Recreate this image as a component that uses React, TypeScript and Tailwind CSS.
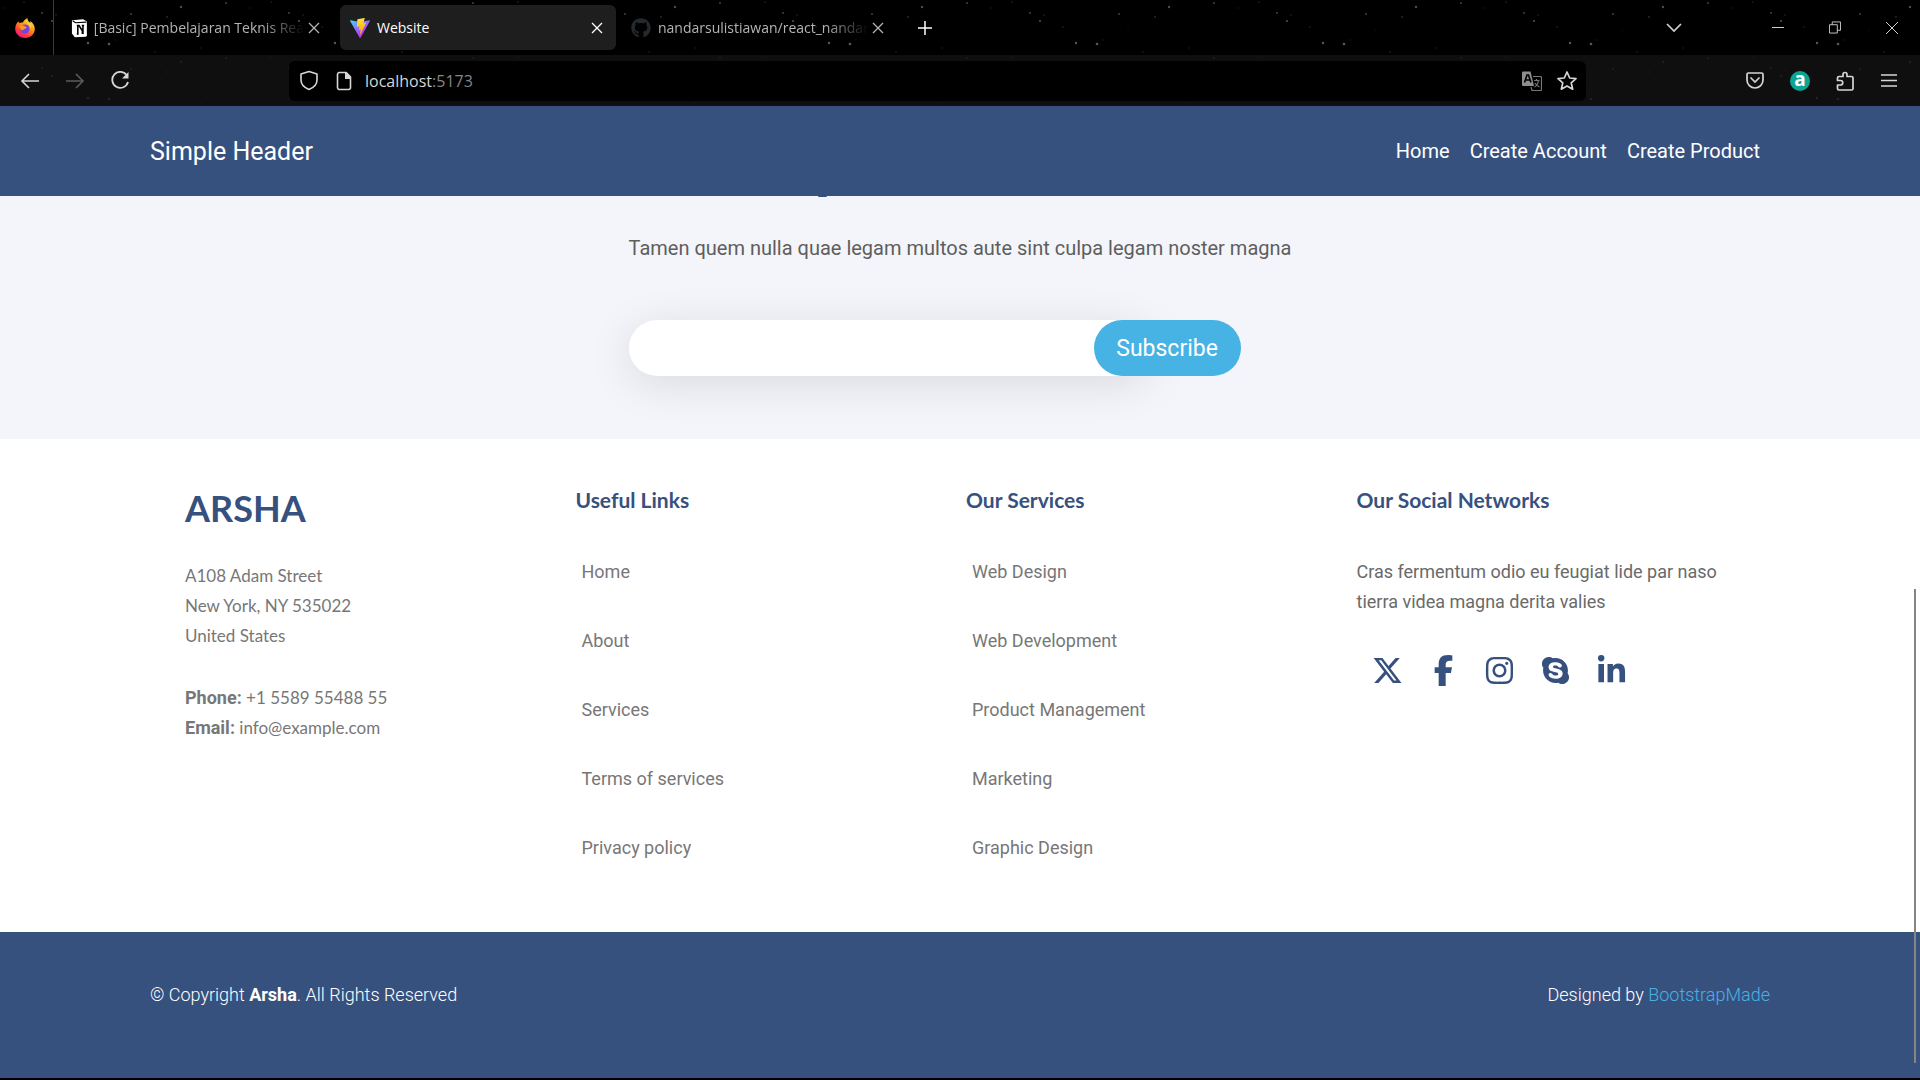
import type { ReactNode } from "react";
import { FaFacebookF, FaInstagram, FaLinkedinIn, FaSkype, FaXTwitter } from "react-icons/fa6";
import { FaGithub } from "react-icons/fa";

const clusters: [number, number, number, number][] = [
  [3, 8, 0.7, 0.25], [24, 2, 0.8, 0.4], [42, 13, 1, 0.6], [75, 27, 0.8, 0.35], [88, 43, 1.2, 0.8],
  [115, 40, 0.7, 0.25], [140, 30, 0.7, 0.2], [181, 7, 1.2, 0.7], [226, 3, 1, 0.6], [167, 17, 0.9, 0.4],
  [201, 48, 0.8, 0.3], [211, 70, 1, 0.3], [139, 68, 1, 0.35], [174, 97, 0.9, 0.3], [116, 98, 1, 0.3],
  [30, 56, 1, 0.35], [60, 88, 0.8, 0.2], [95, 62, 0.7, 0.25], [7, 76, 0.8, 0.2], [193, 80, 0.7, 0.2],
  [131, 14, 1, 0.6], [52, 21, 1.1, 0.7], [56, 15, 0.8, 0.4], [109, 44, 1.3, 0.8], [155, 52, 0.8, 0.35],
];

function Stars() {
  return (
    <svg aria-hidden="true" className="pointer-events-none absolute inset-0 h-full w-full">
      {Array.from({ length: 8 }, (_, k) =>
        clusters.map(([x, y, r, o], i) => (
          <circle key={k + "-" + i} cx={k * 247 + x} cy={y} r={r} fill="#c9c9c9" opacity={o * 0.55} />
        )),
      )}
    </svg>
  );
}

function IconButton({ label, className, children }: { label: string; className: string; children: ReactNode }) {
  return (
    <button type="button" aria-label={label} className={"flex h-6 shrink-0 items-center justify-center " + className}>
      {children}
    </button>
  );
}

function CloseIcon() {
  return (
    <svg width="12" height="12" viewBox="0 0 12 12" stroke="currentColor" strokeWidth="1.3" fill="none">
      <path d="M1 1l10 10M11 1L1 11" />
    </svg>
  );
}

function FirefoxIcon() {
  return (
    <svg width="20" height="20" viewBox="0 0 20 20">
      <defs>
        <linearGradient id="ff" x1="0.8" y1="0" x2="0.2" y2="1">
          <stop offset="0" stopColor="#fff44f" />
          <stop offset="0.4" stopColor="#ff980e" />
          <stop offset="0.75" stopColor="#ff3647" />
          <stop offset="1" stopColor="#e31587" />
        </linearGradient>
      </defs>
      <path d="M3.2 3.3c.3.9.8 1.5 1.3 1.8 1-.6 2.3-.8 3.4-.5C8.300 3 10 1.500 12.300 0c0 2.500 1.700 3.600 3 5.100.1-.7 0-1.400-.2-2C18 4.800 19.800 7.800 19.800 11c0 5-4.300 9-9.600 9S.2 16 .2 10.800c0-3 1.300-5.400 3-7.500z" fill="url(#ff)" />
      <circle cx="10" cy="11" r="4.600" fill="#7542e5" />
      <path d="M4.500 8c2-1.200 4-.6 5.600.6 1.500.2 1.700 1 .9 1.700-1.500.6-2.600.7-3 2.300-1.800-.4-3.200-2-3.500-4.600z" fill="#ff9a1f" />
      <path d="M12 5c2.300 1.300 3.800 3.700 3.500 6.500 1.500-2.500.8-5.500-1-7z" fill="#ffd43a" />
    </svg>
  );
}

function NotionIcon() {
  return (
    <svg width="18" height="20" viewBox="0 0 18 20">
      <path d="M1 1.800l12-1.300L17 3v15l-1 1.300-12 .5L1 16z" fill="#fff" />
      <path d="M1.800 2.200l3 2.200 11.600-.7" stroke="#000" strokeWidth="1.200" fill="none" />
      <path d="M6.200 7.300h2.400l4.200 6.700V7.500M6.200 16.500h2M7.300 7.500v9M11.500 7.300h2.600M12.200 13.500v2.800" stroke="#000" strokeWidth="1.700" fill="none" />
    </svg>
  );
}

function ViteIcon() {
  return (
    <svg width="20" height="20" viewBox="0 0 256 257">
      <defs>
        <linearGradient id="va" x1="-.8%" x2="57.600%" y1="7.600%" y2="78.400%">
          <stop offset="0" stopColor="#41D1FF" />
          <stop offset="1" stopColor="#BD34FE" />
        </linearGradient>
        <linearGradient id="vb" x1="43.400%" x2="50.300%" y1="2.200%" y2="89%">
          <stop offset="0" stopColor="#FFEA83" />
          <stop offset=".08" stopColor="#FFDD35" />
          <stop offset="1" stopColor="#FFA800" />
        </linearGradient>
      </defs>
      <path fill="url(#va)" d="M255.153 37.938L134.897 252.976c-2.483 4.440-8.862 4.466-11.382.048L.875 37.958c-2.746-4.814 1.371-10.646 6.827-9.670l120.385 21.517a6.537 6.537 0 0 0 2.322-.004l117.867-21.483c5.438-.991 9.574 4.796 6.877 9.620Z" />
      <path fill="url(#vb)" d="M185.432.063L96.440 17.501a3.268 3.268 0 0 0-2.634 3.014l-5.474 92.456a3.268 3.268 0 0 0 3.997 3.378l24.777-5.718c2.318-.535 4.413 1.507 3.936 3.838l-7.361 36.047c-.495 2.426 1.782 4.500 4.151 3.780l15.304-4.649c2.372-.720 4.652 1.360 4.150 3.788l-11.698 56.621c-.732 3.542 3.979 5.473 5.943 2.437l1.313-2.028l72.516-144.720c1.215-2.423-.880-5.186-3.540-4.672l-25.505 4.922c-2.396.462-4.435-1.770-3.759-4.114l16.646-57.705c.677-2.350-1.370-4.583-3.769-4.113Z" />
    </svg>
  );
}

function TabStrip() {
  return (
    <div className="relative h-[55px] bg-black">
      <Stars />
      <div className="relative flex h-full items-center text-[#b4b4b4]">
        <div className="flex h-full w-[54px] shrink-0 items-center border-r border-[#3a3a3a] pl-[15px]">
          <FirefoxIcon />
        </div>
        <div className="flex w-[286px] items-center pr-5 pl-[17px]">
          <NotionIcon />
          <span className="ml-[6px] flex-1 text-sm whitespace-nowrap [mask-image:linear-gradient(to_right,black_80%,transparent)]">
            [Basic] Pembelajaran Teknis Rea
          </span>
          <IconButton label="Close Notion tab" className="ml-1 w-3"><CloseIcon /></IconButton>
        </div>
        <div className="flex h-[45px] w-[276px] items-center rounded-md bg-[#1e1e1e] px-[10px] text-white">
          <ViteIcon />
          <span className="ml-[7px] flex-1 text-sm">Website</span>
          <IconButton label="Close Website tab" className="w-[18px]"><CloseIcon /></IconButton>
        </div>
        <div className="flex w-[270px] items-center pl-[15px]">
          <FaGithub size={20} color="#24292e" />
          <span className="ml-[7px] w-[210px] text-sm whitespace-nowrap [mask-image:linear-gradient(to_right,black_80%,transparent)]">
            nandarsulistiawan/react_nandar
          </span>
          <IconButton label="Close GitHub tab" className="ml-1 w-3"><CloseIcon /></IconButton>
        </div>
        <IconButton label="New tab" className="ml-[31px] w-4 text-white">
          <svg width="16" height="16" viewBox="0 0 16 16" stroke="currentColor" strokeWidth="1.500"><path d="M8 1v14M1 8h14" /></svg>
        </IconButton>
        <div className="ml-auto flex items-center text-[#cfcfcf]">
          <IconButton label="List all tabs" className="w-4">
            <svg width="16" height="10" viewBox="0 0 16 10" stroke="currentColor" strokeWidth="1.700" fill="none"><path d="M1 1l7 7 7-7" /></svg>
          </IconButton>
          <IconButton label="Minimize" className="ml-[90px] w-3">
            <svg width="12" height="2" viewBox="0 0 12 2" fill="currentColor"><path d="M0 0h12v1H0z" /></svg>
          </IconButton>
          <IconButton label="Restore" className="ml-[45px] w-3">
            <svg width="13" height="13" viewBox="0 0 13 13" stroke="currentColor" fill="none"><path d="M.5 3.500h8.500v9H.5zM3.500 3.500v-3h9v9H9" /></svg>
          </IconButton>
          <IconButton label="Close window" className="mr-[21px] ml-[44px] w-[14px]">
            <svg width="14" height="14" viewBox="0 0 14 14" stroke="currentColor" fill="none"><path d="M1 1l12 12M13 1L1 13" /></svg>
          </IconButton>
        </div>
      </div>
    </div>
  );
}

function Toolbar() {
  return (
    <div className="relative h-[51px] bg-[#0f0f0f] text-[#d6d6d6]">
      <div className="absolute inset-0 overflow-hidden opacity-25"><Stars /></div>
      <div className="relative flex h-full items-center">
        <IconButton label="Back" className="ml-5 w-5">
          <svg width="20" height="16" viewBox="0 0 20 16" stroke="currentColor" strokeWidth="1.600" fill="none"><path d="M19 8H2M9 1L2 8l7 7" /></svg>
        </IconButton>
        <IconButton label="Forward" className="ml-[25px] w-5 text-[#5c5c5c]">
          <svg width="20" height="16" viewBox="0 0 20 16" stroke="currentColor" strokeWidth="1.600" fill="none"><path d="M1 8h17M11 1l7 7-7 7" /></svg>
        </IconButton>
        <IconButton label="Reload" className="ml-[25px] w-5">
          <svg width="20" height="20" viewBox="0 0 20 20" stroke="currentColor" strokeWidth="1.800" fill="none"><path d="M17 4.500A8 8 0 1 0 18 11" /><path d="M18.500 1v6.500H12z" fill="currentColor" stroke="none" /></svg>
        </IconButton>
        <div className="mr-40 ml-[159px] flex h-10 flex-1 items-center rounded-md bg-black">
          <IconButton label="Tracking protection" className="ml-[10px] w-5">
            <svg width="20" height="21" viewBox="0 0 20 21" stroke="currentColor" strokeWidth="1.600" fill="none"><path d="M10 1.500L18 4v6c0 4-3 7.500-8 9.500C5 17.500 2 14 2 10V4z" strokeLinejoin="round" /></svg>
          </IconButton>
          <IconButton label="Site information" className="ml-4 w-[18px]">
            <svg width="16" height="20" viewBox="0 0 16 20" stroke="currentColor" strokeWidth="1.600" fill="none"><path d="M3 1.500h7L14.500 6v10.500a2 2 0 0 1-2 2H3a2 2 0 0 1-1.500-2v-13A2 2 0 0 1 3 1.500z" /><path d="M9 1h1.500L15 5.500V8H9z" fill="currentColor" stroke="none" /></svg>
          </IconButton>
          <div className="ml-3 text-base">localhost<span className="text-[#858585]">:5173</span></div>
          <IconButton label="Translate page" className="ml-auto w-5">
            <svg width="20" height="20" viewBox="0 0 20 20" fill="none">
              <path d="M0 1.500Q0 .5 1 .5h7.500L12 15H1q-1 0-1-1z" fill="#8f8f8f" />
              <path d="M2.500 11.500L5 4h1.500L9 11.500M3.500 9h4.500" stroke="#000" strokeWidth="1.600" />
              <path d="M11 5.500h7.500q1 0 1 1v12q0 1-1 1H10L9 16" stroke="#777" strokeWidth="1.200" />
              <path d="M12 9.500h5.500M14.500 8v1.500M16.500 9.500q-1 5-4 6.500M13 12q2 3.500 4.500 4" stroke="#777" strokeWidth="1.200" />
            </svg>
          </IconButton>
          <IconButton label="Bookmark this page" className="mr-2 ml-[14px] w-[22px]">
            <svg width="22" height="22" viewBox="0 0 22 22" stroke="currentColor" strokeWidth="1.700" strokeLinejoin="round" fill="none"><path d="M11 2l2.700 6 6.300.600-4.800 4.200 1.500 6.400L11 16l-5.700 3.200 1.500-6.400L2 8.600 8.300 8z" /></svg>
          </IconButton>
        </div>
        <IconButton label="Pocket" className="w-[18px]">
          <svg width="18" height="17" viewBox="0 0 18 17" stroke="currentColor" strokeWidth="1.700" fill="none" strokeLinecap="round"><path d="M2.500 1h13a1.500 1.500 0 0 1 1.500 1.500V8a8 8 0 0 1-16 0V2.500A1.500 1.500 0 0 1 2.500 1z" /><path d="M5 6l4 4 4-4" /></svg>
        </IconButton>
        <IconButton label="Extension" className="ml-[26px] w-5">
          <span className="flex size-5 items-center justify-center rounded-full bg-[#0aa595] pb-[3px] text-[19px] leading-none font-bold text-white">a</span>
        </IconButton>
        <IconButton label="Extensions" className="ml-[26px] w-[18px]">
          <svg width="18" height="20" viewBox="0 0 18 20" stroke="currentColor" strokeWidth="1.700" strokeLinejoin="round" fill="none"><path d="M3 5.500h4V3.500a2 2 0 0 1 4 0v2h4.500q1.500 0 1.500 1.500v10.500q0 1.500-1.500 1.500H3q-1.500 0-1.500-1.500V14h3a2 2 0 0 0 0-4.500h-3V7q0-1.500 1.500-1.500z" /></svg>
        </IconButton>
        <IconButton label="Menu" className="mr-[23px] ml-[27px] w-4">
          <svg width="16" height="13" viewBox="0 0 16 13" stroke="currentColor" strokeWidth="1.600"><path d="M0 1h16M0 6.500h16M0 12h16" /></svg>
        </IconButton>
      </div>
    </div>
  );
}

function LinkColumn({ title, links }: { title: string; links: string[] }) {
  return (
    <nav aria-label={title}>
      <h4 className="font-[Lato,sans-serif] text-[21px] leading-6 font-bold text-[#37517e]">{title}</h4>
      <ul className="mt-[46px] flex flex-col gap-[42px] pl-[6px]">
        {links.map((l) => (
          <li key={l} className="leading-[27px]"><a href="#">{l}</a></li>
        ))}
      </ul>
    </nav>
  );
}

const socials = [
  { label: "X", Icon: FaXTwitter },
  { label: "Facebook", Icon: FaFacebookF },
  { label: "Instagram", Icon: FaInstagram },
  { label: "Skype", Icon: FaSkype },
  { label: "LinkedIn", Icon: FaLinkedinIn },
];

export default function App() {
  return (
    <div className="relative flex min-h-screen flex-col border-b-2 border-black bg-white font-[Roboto,sans-serif]">
      <div className="font-['Open_Sans',sans-serif]">
        <TabStrip />
        <Toolbar />
      </div>

      <header className="flex h-[90px] items-center justify-between bg-[#37517e] pr-40 pl-[150px] text-white">
        <a href="#" className="pt-[2px] text-[25px]">Simple Header</a>
        <nav className="flex gap-5 text-xl">
          <a href="#">Home</a>
          <a href="#">Create Account</a>
          <a href="#">Create Product</a>
        </nav>
      </header>

      <section className="relative flex flex-col items-center bg-[#f3f5fa] pt-[37px] pb-[63px]">
        <div aria-hidden="true" className="absolute top-0 left-[818px] h-px w-[9px] rounded-b bg-[#37517e]" />
        <div>
          <p className="text-xl leading-[30px] text-[#5e5e5e]">Tamen quem nulla quae legam multos aute sint culpa legam noster magna</p>
          <form className="mt-[57px] flex" onSubmit={(e) => e.preventDefault()}>
            <input type="email" aria-label="Email address" className="h-14 w-[521px] rounded-full bg-white px-6 text-xl shadow-[0_8px_45px_rgba(0,0,0,0.11)] outline-none" />
            <button type="submit" className="-ml-14 h-14 w-[147px] rounded-full bg-[#47b2e4] pt-[2px] text-[23px] text-white">Subscribe</button>
          </form>
        </div>
      </section>

      <footer className="flex flex-1 flex-col">
        <div className="grid grid-cols-4 bg-white pt-[49px] pr-[173px] pb-[71px] pl-[185px] text-lg text-[#777777]">
          <div>
            <h3 className="font-[Lato,sans-serif] text-[36px] leading-10 font-bold text-[#37517e]">ARSHA</h3>
            <address className="mt-[33px] font-[Lato,sans-serif] text-[17px] leading-[30px] not-italic">
              A108 Adam Street<br />New York, NY 535022<br />United States
              <div className="mt-8">
                <strong className="font-[Roboto,sans-serif] text-lg leading-[30px]">Phone:</strong> +1 5589 55488 55<br />
                <strong className="font-[Roboto,sans-serif] text-lg leading-[30px]">Email:</strong> info@example.com
              </div>
            </address>
          </div>
          <LinkColumn title="Useful Links" links={["Home", "About", "Services", "Terms of services", "Privacy policy"]} />
          <LinkColumn title="Our Services" links={["Web Design", "Web Development", "Product Management", "Marketing", "Graphic Design"]} />
          <div>
            <h4 className="font-[Lato,sans-serif] text-[21px] leading-6 font-bold text-[#37517e]">Our Social Networks</h4>
            <p className="mt-[45px] pr-7 leading-[30px] text-[#6a6a6a]">Cras fermentum odio eu feugiat lide par naso tierra videa magna derita valies</p>
            <div className="mt-[38px] flex items-center gap-[25px] pl-[15px] text-[#37517e]">
              {socials.map(({ label, Icon }) => (
                <a key={label} href="#" aria-label={label}><Icon size={31} /></a>
              ))}
            </div>
          </div>
        </div>
        <div className="flex flex-1 items-start justify-between bg-[#37517e] px-[150px] pt-[49px] text-lg leading-7 font-light text-white">
          <p>© Copyright <strong className="font-bold">Arsha</strong>. All Rights Reserved</p>
          <p>Designed by <a href="#" className="text-[#47b2e4]">BootstrapMade</a></p>
        </div>
      </footer>

      <div aria-hidden="true" className="absolute right-1 bottom-[15px] h-[474px] w-[2px] bg-[#858585]" />
    </div>
  );
}
